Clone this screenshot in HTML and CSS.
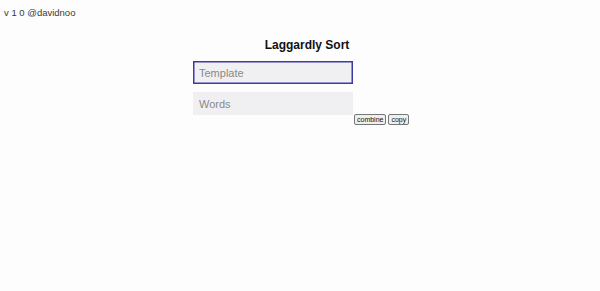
FILE: index.html
```html
<!DOCTYPE html>
<html>
<head>
<meta charset="utf-8">
<link rel="stylesheet" href="styles.css">
</head>
<body>
<div class="version">v 1 0 @davidnoo</div>
<main class="app">
  <h1 class="title">Laggardly Sort</h1>
  <div class="row">
    <div class="fields">
      <input class="field field-focus" type="text" placeholder="Template" autofocus>
      <input class="field" type="text" placeholder="Words">
    </div>
    <div class="actions">
      <button class="btn" type="button">combine</button>
      <button class="btn" type="button">copy</button>
    </div>
  </div>
</main>
</body>
</html>
```
FILE: styles.css
```css
html, body {
  margin: 0;
  padding: 0;
  background: #fdfdfd;
  font-family: "Liberation Sans", Arial, sans-serif;
}
.version {
  padding: 7px 0 0 4px;
  font-size: 9.5px;
  line-height: 11px;
  color: #3a3a3a;
}
.app {
  width: 216px;
  margin: 0 auto;
  display: flex;
  flex-direction: column;
}
.title {
  margin: 20px 0 0 0;
  padding-left: 14px;
  text-align: center;
  font-size: 12px;
  line-height: 14px;
  font-weight: bold;
  color: #111;
}
.row {
  display: flex;
  align-items: flex-start;
  margin-top: 9px;
  margin-left: 1px;
}
.fields {
  display: flex;
  flex-direction: column;
  gap: 8px;
  width: 160px;
}
.field {
  box-sizing: border-box;
  width: 160px;
  height: 23px;
  margin: 0;
  padding: 0 6px;
  border: 0;
  background: #f0eff2;
  font-family: "Liberation Sans", Arial, sans-serif;
  font-size: 11px;
  color: #333;
  outline: none;
}
.field::placeholder {
  color: #8a8a8a;
}
.field-focus {
  box-shadow: inset 0 0 0 1.5px #3c3aa6;
}
.actions {
  display: flex;
  gap: 2px;
  margin-left: 1px;
  margin-top: 53px;
}
.btn {
  appearance: none;
  box-sizing: border-box;
  margin: 0;
  padding: 0 2px;
  height: 11px;
  font-family: "Liberation Sans", Arial, sans-serif;
  font-size: 7px;
  line-height: 9px;
  color: #111;
  background: #efefef;
  border: 1px solid #767676;
  border-radius: 2px;
}
```
